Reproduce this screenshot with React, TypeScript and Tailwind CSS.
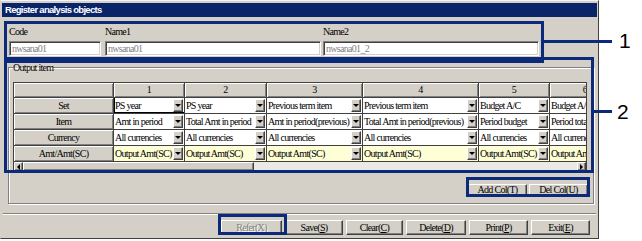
const ui = { fontFamily: '"Liberation Serif", "Times New Roman", serif' };

const raised =
  "bg-[#d4d0c8] border border-t-white border-l-white border-r-[#404040] border-b-[#404040] shadow-[inset_-1px_-1px_0_#808080]";
const sunken =
  "bg-white border border-t-[#808080] border-l-[#808080] border-r-white border-b-white shadow-[inset_1px_1px_0_#404040,inset_-1px_-1px_0_#d4d0c8]";

const txt = "text-[10px] tracking-[-0.7px]";

const columns = [
  { n: "1", w: "w-[71px]", cells: ["PS year", "Amt in period", "All currencies", "Output Amt(SC)"] },
  { n: "2", w: "w-[82px]", cells: ["PS year", "Total Amt in period", "All currencies", "Output Amt(SC)"] },
  { n: "3", w: "w-[96px]", cells: ["Previous term item", "Amt in period(previous)", "All currencies", "Output Amt(SC)"] },
  { n: "4", w: "w-[116px]", cells: ["Previous term item", "Total Amt in period(previous)", "All currencies", "Output Amt(SC)"] },
  { n: "5", w: "w-[71px]", cells: ["Budget A/C", "Period budget", "All currencies", "Output Amt(SC)"] },
  { n: "6", w: "w-[71px]", cells: ["Budget A/C", "Period total budget", "All currencies", "Output Amt(SC)"] },
];

const rowHeads = ["Set", "Item", "Currency", "Amt/Amt(SC)"];

function DropBtn() {
  return (
    <div className={`${raised} w-[10px] h-[13px] my-[1px] mr-[1px] shrink-0 flex items-center justify-center`}>
      <div className="w-0 h-0 border-l-[3px] border-r-[3px] border-t-[3px] border-l-transparent border-r-transparent border-t-black" />
    </div>
  );
}

function Btn({ label, hot, w, h = "h-[15px]", disabled = false }: { label: string; hot: string; w: string; h?: string; disabled?: boolean }) {
  return (
    <div
      className={`${raised} ${w} ${h} ${txt} shrink-0 flex items-center justify-center leading-none ${
        disabled ? "text-[#808080] [text-shadow:1px_1px_0_white]" : "text-black"
      }`}
    >
      <span className="whitespace-nowrap">
        {label}(<span className="underline">{hot}</span>)
      </span>
    </div>
  );
}

function ScrollArrow({ left }: { left: boolean }) {
  return (
    <div className={`${raised} w-[9px] h-[9px] shrink-0 flex items-center justify-center`}>
      <div
        className={
          left
            ? "w-0 h-0 border-t-[3px] border-b-[3px] border-r-[3px] border-t-transparent border-b-transparent border-r-black"
            : "w-0 h-0 border-t-[3px] border-b-[3px] border-l-[3px] border-t-transparent border-b-transparent border-l-black"
        }
      />
    </div>
  );
}

export default function App() {
  return (
    <div className="relative w-[642px] h-[241px] bg-white overflow-hidden text-black" style={ui}>
      <div className="w-[599px] h-[239px] bg-[#d4d0c8] border border-t-[#f4f4f4] border-l-[#d4d0c8] border-r-[#404040] border-b-[#404040] flex flex-col">
        <div className="mx-[1px] mt-[2px] h-[14px] bg-[#0a246a] flex items-center pl-[3px]">
          <span className="text-white font-bold text-[9.5px] leading-none tracking-[-0.7px] [font-family:'Liberation_Sans',Arial,sans-serif]">
            Register analysis objects
          </span>
        </div>

        <div className={`flex pl-[8px] mt-[9px] gap-[4px] ${txt}`}>
          <div className="w-[92px] flex flex-col">
            <span className="leading-[11px]">Code</span>
            <div className={`${sunken} mt-[4px] h-[15px] leading-[13px] pl-[2px] text-[#808080]`}>nwsana01</div>
          </div>
          <div className="w-[216px] flex flex-col">
            <span className="leading-[11px]">Name1</span>
            <div className={`${sunken} mt-[4px] h-[15px] leading-[13px] pl-[2px] text-[#808080]`}>nwsana01</div>
          </div>
          <div className="w-[216px] flex flex-col ml-[-2px]">
            <span className="leading-[11px]">Name2</span>
            <div className={`${sunken} mt-[4px] h-[15px] leading-[13px] pl-[2px] text-[#808080]`}>nwsana01_2</div>
          </div>
        </div>

        <fieldset className="mt-[6px] ml-[7px] w-[586px] border border-[#808080] shadow-[inset_1px_1px_0_white,1px_1px_0_white] pl-[4px] pr-[5px] pt-[9px] pb-[7px]">
          <legend className={`${txt} leading-[11px] px-0`}>Output item</legend>
          <div className={`w-[574px] border border-[#404040] overflow-hidden ${txt}`}>
            <div className="flex h-[15px]">
              <div className="w-[100px] shrink-0 h-[15px] border-r border-b border-[#404040] bg-[#d4d0c8] shadow-[inset_1px_1px_0_white,inset_-1px_-1px_0_#808080]" />
              {columns.map((c) => (
                <div
                  key={c.n}
                  className={`${c.w} shrink-0 h-[15px] border-r border-b border-[#404040] bg-[#d4d0c8] shadow-[inset_1px_1px_0_white,inset_-1px_-1px_0_#808080] flex items-center justify-center leading-none`}
                >
                  {c.n}
                </div>
              ))}
            </div>
            {rowHeads.map((rh, ri) => (
              <div key={rh} className="flex h-[16px]">
                <div className="w-[100px] shrink-0 h-[16px] border-r border-b border-[#404040] bg-[#d4d0c8] shadow-[inset_1px_1px_0_white,inset_-1px_-1px_0_#808080] flex items-center justify-center leading-none">
                  {rh}
                </div>
                {columns.map((c, ci) => (
                  <div
                    key={c.n}
                    className={`${c.w} shrink-0 h-[16px] border-r border-b border-[#404040] flex ${
                      ri === 3 ? "bg-[#ffffd6]" : "bg-white"
                    } ${ri === 0 && ci === 0 ? "shadow-[inset_0_-1px_0_black,inset_1px_0_0_black]" : ""}`}
                  >
                    <span className="flex-1 min-w-0 pl-[1px] leading-[15px] whitespace-nowrap overflow-hidden">{c.cells[ri]}</span>
                    <DropBtn />
                  </div>
                ))}
              </div>
            ))}
            <div className="flex h-[9px] bg-[#ebe9e5]">
              <ScrollArrow left />
              <div className={`${raised} w-[231px] h-[9px] shrink-0`} />
              <div className="flex-1" />
              <ScrollArrow left={false} />
            </div>
          </div>
          <div className="flex justify-end gap-[2px] mt-[12px]">
            <Btn label="Add Col" hot="T" w="w-[59px]" h="h-[12px]" />
            <Btn label="Del Col" hot="U" w="w-[59px]" h="h-[12px]" />
          </div>
        </fieldset>

        <div className="mx-[2px] mt-[9px] h-[2px] border-t border-t-[#808080] border-b border-b-white" />

        <div className="flex justify-end gap-[3px] mt-[5px] pr-[8px]">
          <Btn label="Refer" hot="X" w="w-[61px]" disabled />
          <Btn label="Save" hot="S" w="w-[58px]" />
          <Btn label="Clear" hot="C" w="w-[57px]" />
          <Btn label="Delete" hot="D" w="w-[60px]" />
          <Btn label="Print" hot="P" w="w-[59px]" />
          <Btn label="Exit" hot="E" w="w-[59px]" />
        </div>
      </div>

      {/* callouts */}
      <div className="absolute left-[4px] top-[21px] w-[540px] h-[42px] border-[3px] border-[#0c2a7a]" />
      <div className="absolute left-[543px] top-[40px] w-[69px] h-[3px] bg-[#0c2a7a]" />
      <span className="absolute left-[619px] top-[30px] text-[21px] leading-[21px] [font-family:'Liberation_Sans',Arial,sans-serif]">1</span>
      <div className="absolute left-[4px] top-[57px] w-[590px] h-[116px] border-[3px] border-[#0c2a7a]" />
      <div className="absolute left-[593px] top-[110px] w-[19px] h-[3px] bg-[#0c2a7a]" />
      <span className="absolute left-[617px] top-[101px] text-[21px] leading-[21px] [font-family:'Liberation_Sans',Arial,sans-serif]">2</span>
      <div className="absolute left-[466px] top-[177px] w-[124px] h-[20px] border-[3px] border-[#0c2a7a]" />
      <div className="absolute left-[218px] top-[214px] w-[69px] h-[21px] border-[3px] border-[#0c2a7a]" />
    </div>
  );
}
